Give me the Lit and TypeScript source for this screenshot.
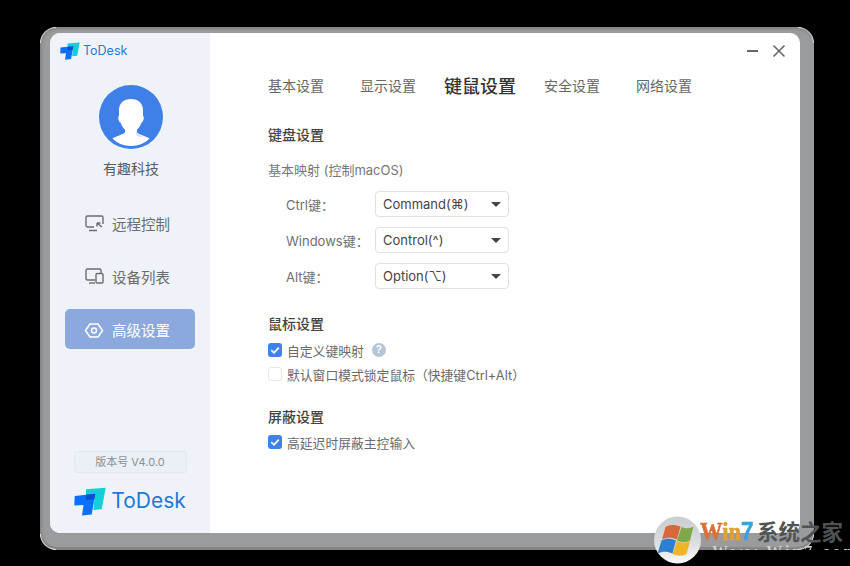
import { LitElement, html, css } from "lit";
import { customElement } from "lit/decorators.js";

const logo = (cls: string) => html`<svg class=${cls} viewBox="0 0 32 29" aria-hidden="true">
  <polygon points="12,2.300 31.700,0.700 27.700,22.300 19.300,23 21,7.300 12,8.300" fill="#12cfd9"></polygon>
  <polygon points="0.700,9 21.300,6.700 17.700,27.500 8,28.500 9.500,18 0.300,18.500" fill="#0a70fa"></polygon>
  <polygon points="12,7.800 21.300,6.800 20.400,12.300 12,13" fill="#0b4ed2"></polygon>
</svg>`;

const check = html`<svg class="tick" viewBox="0 0 14 14"><path d="M3.300 7.200 L6 9.800 L10.800 4.600" fill="none" stroke="#fff" stroke-width="1.700"></path></svg>`;

@customElement("app-root")
export class AppRoot extends LitElement {
  static styles = css`
    :host {
      display: block;
      width: 850px;
      height: 566px;
      background: #000;
      position: relative;
      overflow: hidden;
      font-family: "Inter", "Noto Sans CJK SC", "Noto Sans", sans-serif;
      color: #666;
    }
    .stage { padding: 27px 36px 16px 40px; }
    .frame {
      position: relative;
      width: 774px;
      height: 523px;
      box-sizing: border-box;
      padding: 6px 13px 17px 10px;
      background: #9a9b9c;
      border-radius: 18px;
      box-shadow: inset 0 4px 3px -2px #808182, inset 4px 0 3px -2px #858687, inset 0 -3px 0 #858687;
    }
    .cn { position: absolute; width: 16px; height: 16px; box-sizing: border-box; border: 0 solid rgba(255, 255, 255, 0.75); }
    .cn.tl { left: 0; top: 0; border-width: 1px 0 0 1px; border-top-left-radius: 18px; }
    .cn.tr { right: 0; top: 0; border-width: 1px 1px 0 0; border-top-right-radius: 18px; }
    .cn.bl { left: 0; bottom: 0; border-width: 0 0 1px 1px; border-bottom-left-radius: 18px; }
    .cn.br { right: 0; bottom: 0; border-width: 0 1px 1px 0; border-bottom-right-radius: 18px; }
    .win {
      display: flex;
      width: 750px;
      height: 500px;
      border-radius: 10px;
      overflow: hidden;
      background: #fff;
    }
    .side {
      width: 160px;
      flex: none;
      background: #eff3f9;
      display: flex;
      flex-direction: column;
      align-items: center;
      position: relative;
    }
    .brand-s {
      align-self: flex-start;
      display: flex;
      align-items: center;
      gap: 3px;
      margin: 8px 0 0 10px;
      font: 12.500px/20px "Inter", "Noto Sans", sans-serif;
      color: #2a78d6;
    }
    .logo-s { width: 20px; height: 18px; }
    .avatar { width: 64px; height: 64px; margin: 24px 0 0 2px; }
    .user { font-size: 14px; line-height: 20px; margin: 10px 0 0 2px; color: #5c5c5c; }
    .nav { display: flex; flex-direction: column; gap: 13px; margin-top: 24px; }
    .nav-item {
      width: 130px;
      height: 40px;
      border-radius: 5px;
      display: flex;
      align-items: center;
      box-sizing: border-box;
      padding-left: 19px;
      gap: 8px;
      font-size: 14.500px;
      color: #6c6c6c;
    }
    .nav-item.on { background: #8ba9dc; color: #fff; }
    .nav-item svg { width: 20px; height: 20px; flex: none; }
    .ver {
      margin-top: auto;
      width: 113px;
      height: 22px;
      box-sizing: border-box;
      border: 1px solid #e3e8f0;
      border-radius: 3px;
      background: #ebf0f7;
      font-size: 11px;
      line-height: 20px;
      text-align: center;
      color: #8a8f96;
    }
    .brand-l {
      display: flex;
      align-items: center;
      gap: 5px;
      margin: 13px 0 17px 0;
      font: 21px/30px "Inter", "Noto Sans", sans-serif;
      color: #1f78d8;
    }
    .logo-l { width: 32px; height: 29px; }
    .main { flex: 1; position: relative; padding: 0 0 0 58px; }
    .ctl { position: absolute; top: 11px; right: 14px; display: flex; gap: 13px; }
    .ctl svg { width: 14px; height: 14px; display: block; }
    .tabs { display: flex; align-items: center; height: 26px; margin-top: 39px; font-size: 14px; color: #666; }
    .tab { width: 92px; flex: none; }
    .tab.n2 { width: 84px; }
    .tab.on { font-size: 18px; width: 100px; color: #333; font-weight: 500; }
    .h { font-size: 14px; line-height: 20px; font-weight: 500; color: #444; }
    .h.first { margin-top: 27px; }
    .sub { font-size: 13px; line-height: 20px; margin-top: 15px; color: #777; }
    .rows { display: flex; flex-direction: column; gap: 10px; margin-top: 11px; }
    .row { display: flex; align-items: center; height: 26px; padding-left: 18px; font-size: 13px; color: #707070; }
    .lab { width: 89px; flex: none; }
    .sel {
      width: 134px;
      height: 26px;
      box-sizing: border-box;
      border: 1px solid #dfe1e6;
      border-radius: 4px;
      display: flex;
      align-items: center;
      justify-content: space-between;
      padding: 0 7px;
      color: #444;
      font-size: 13px;
    }
    .arrow { width: 0; height: 0; border-left: 5px solid transparent; border-right: 5px solid transparent; border-top: 5px solid #444; }
    .h.mouse { margin-top: 25px; }
    .h.shield { margin-top: 23px; }
    .chk { display: flex; align-items: center; gap: 4px; height: 20px; font-size: 12.800px; color: #6a6a6a; }
    .chks { display: flex; flex-direction: column; gap: 4px; margin-top: 6px; }
    .chks.last { margin-top: 5px; }
    .box { width: 14px; height: 14px; box-sizing: border-box; border-radius: 3px; background: #3f81e8; flex: none; margin-right: 1px; }
    .box.off { background: #fff; border: 1px solid #e4e5e8; }
    .tick { display: block; width: 14px; height: 14px; }
    .help {
      width: 14px; height: 14px; border-radius: 50%; background: #b5c6d8; color: #fff;
      font: 700 10px/14px "Liberation Sans", sans-serif; text-align: center; margin-left: 4px;
    }
    .wm { position: absolute; left: 653px; top: 516px; width: 197px; height: 50px; }
    .orb { position: absolute; left: 0; top: 0; width: 50px; height: 48px; }
    .wm-t {
      position: absolute; left: 47px; top: 3px; white-space: nowrap; transform: scaleX(0.87); transform-origin: left center;
      font: 700 26px/24px "Liberation Serif", serif;
      -webkit-text-stroke: 0.6px currentColor;
    }
    .wm-w { color: #d9713c; }
    .wm-i { color: #e0a032; }
    .wm-7 { color: #3f9fdc; font-family: "Liberation Sans", sans-serif; }
    .wm-c { position: absolute; left: 104px; top: 3px; color: #4f5354; font: 700 21.500px/24px "Noto Sans CJK SC", sans-serif; white-space: nowrap; }
    .wm-u {
      position: absolute; left: 59px; top: 28px; white-space: nowrap;
      font: 700 16px/16px "Liberation Serif", serif; letter-spacing: 3px;
      color: transparent;
      background: linear-gradient(#d0d0d0 0, #d0d0d0 6px, #000 6px);
      -webkit-background-clip: text;
      background-clip: text;
    }
  `;

  render() {
    return html`
      <div class="stage">
        <div class="frame">
          <i class="cn tl"></i><i class="cn tr"></i><i class="cn bl"></i><i class="cn br"></i>
          <div class="win">
            <aside class="side">
              <div class="brand-s">${logo("logo-s")}<span>ToDesk</span></div>
              <svg class="avatar" viewBox="0 0 64 64">
                <circle cx="32" cy="32" r="32" fill="#3f7fe8"></circle>
                <path d="M32 14c7.500 0 12 4.500 12 11v6c1 0 1 3 0 5-.5 1-1 1.500-1.500 1.500-1 3-2.500 5.500-4.500 7v3c2 2 8 3.500 12.500 6-4 4.500-11 7.500-18.500 7.500S17.500 58 13.500 53.500C18 51 24 49.500 26 47.500v-3c-2-1.500-3.500-4-4.500-7-.5 0-1-.5-1.500-1.500-1-2-1-5 0-5v-6C20 18.500 24.500 14 32 14z" fill="#fff"></path>
                <path d="M38 44.500v3c1.500 2 4 3 6 4-3 1-6 0-7-2.500l1-4.500z" fill="#cfe2fa"></path>
              </svg>
              <div class="user">有趣科技</div>
              <nav class="nav">
                <div class="nav-item">
                  <svg viewBox="0 0 20 20" fill="none" stroke="#6c6c6c" stroke-width="1.400">
                    <path d="M10 14H3.500A1.500 1.500 0 0 1 2 12.500V4.500A1.500 1.500 0 0 1 3.500 3h14A1.500 1.500 0 0 1 19 4.500V11"></path>
                    <path d="M5 17.500h8M13 10l5 4M13 10v3.500M13 10h3.500"></path>
                  </svg>
                  <span>远程控制</span>
                </div>
                <div class="nav-item">
                  <svg viewBox="0 0 20 20" fill="none" stroke="#6c6c6c" stroke-width="1.400">
                    <path d="M11 14H3.500A1.500 1.500 0 0 1 2 12.500V4.500A1.500 1.500 0 0 1 3.500 3h12A1.500 1.500 0 0 1 17 4.500V7"></path>
                    <path d="M5 17h6"></path>
                    <rect x="12" y="7.500" width="7" height="9.500" rx="1.200"></rect>
                  </svg>
                  <span>设备列表</span>
                </div>
                <div class="nav-item on">
                  <svg viewBox="0 -1.500 20 20" fill="none" stroke="#fff" stroke-width="1.500">
                    <path d="M6 3.500h8L18.500 10 14 16.500H6L1.500 10z" stroke-linejoin="round"></path>
                    <circle cx="10" cy="10" r="2.500"></circle>
                  </svg>
                  <span>高级设置</span>
                </div>
              </nav>
              <div class="ver">版本号 V4.0.0</div>
              <div class="brand-l">${logo("logo-l")}<span>ToDesk</span></div>
            </aside>
            <main class="main">
              <div class="ctl">
                <svg viewBox="0 0 14 14"><path d="M2 7h11" stroke="#666" stroke-width="2"></path></svg>
                <svg viewBox="0 0 14 14"><path d="M1.500 1.500l11 11M12.500 1.500l-11 11" stroke="#666" stroke-width="1.600"></path></svg>
              </div>
              <div class="tabs">
                <span class="tab">基本设置</span>
                <span class="tab n2">显示设置</span>
                <span class="tab on">键鼠设置</span>
                <span class="tab">安全设置</span>
                <span class="tab">网络设置</span>
              </div>
              <div class="h first">键盘设置</div>
              <div class="sub">基本映射 (控制macOS)</div>
              <div class="rows">
                <div class="row"><span class="lab">Ctrl键：</span><div class="sel">Command(⌘)<i class="arrow"></i></div></div>
                <div class="row"><span class="lab">Windows键：</span><div class="sel">Control(^)<i class="arrow"></i></div></div>
                <div class="row"><span class="lab">Alt键：</span><div class="sel">Option(⌥)<i class="arrow"></i></div></div>
              </div>
              <div class="h mouse">鼠标设置</div>
              <div class="chks">
                <div class="chk"><span class="box">${check}</span>自定义键映射<span class="help">?</span></div>
                <div class="chk"><span class="box off"></span>默认窗口模式锁定鼠标（快捷键Ctrl+Alt）</div>
              </div>
              <div class="h shield">屏蔽设置</div>
              <div class="chks last">
                <div class="chk"><span class="box">${check}</span>高延迟时屏蔽主控输入</div>
              </div>
            </main>
          </div>
        </div>
      </div>
      <div class="wm">
        <svg class="orb" viewBox="0 0 50 48">
          <defs>
            <linearGradient id="g" x1="0" y1="0" x2="0" y2="1"><stop offset="0" stop-color="#c9cdd0"></stop><stop offset="0.5" stop-color="#d8dadb"></stop><stop offset="1" stop-color="#fafafa"></stop></linearGradient>
          </defs>
          <circle cx="24.500" cy="24" r="23.500" fill="url(#g)"></circle>
          <path d="M12.500 11c5-3 10-2 15-.5l-3.500 13c-5-2-10-2.500-15 0z" fill="#d9673a"></path>
          <path d="M28.500 11c4 1.500 8 2 12-.5l-3.500 14c-4 2-8 2-13 0z" fill="#7fa84a"></path>
          <path d="M8.500 24.500c5-2.500 10-2 14.500 0l-3.500 13c-5-2-10-2.500-15 0z" fill="#2f7fd0"></path>
          <path d="M24 25c5 2 9 2 13 0l-3.500 13c-4 2-8 2-14 0z" fill="#f0b429"></path>
        </svg>
        <div class="wm-t"><span class="wm-w">W</span><span class="wm-i">in</span><span class="wm-7">7</span></div>
        <div class="wm-c">系统之家</div>
        <div class="wm-u">Www.Win7.com</div>
      </div>
    `;
  }
}
